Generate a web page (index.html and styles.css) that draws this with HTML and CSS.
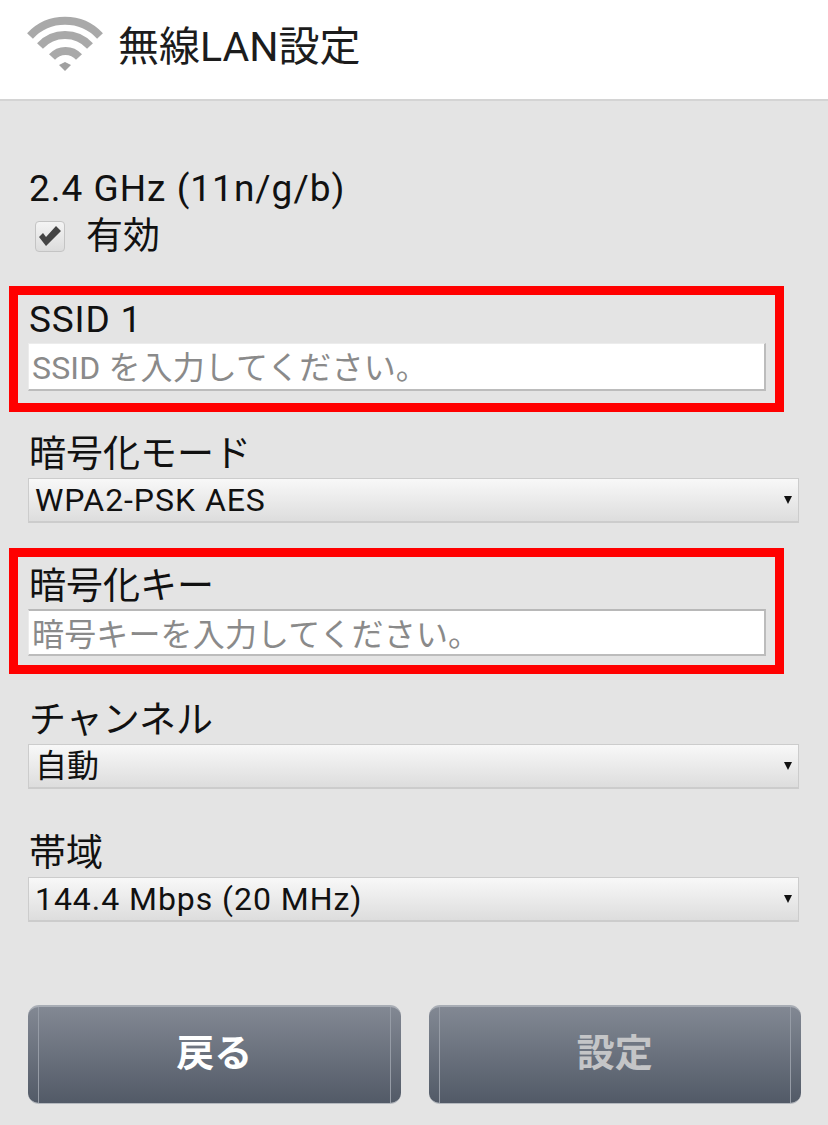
FILE: index.html
```html
<!DOCTYPE html>
<html lang="ja">
<head>
    <meta charset="UTF-8">
    <meta name="viewport" content="width=device-width, initial-scale=1.0">
    <title>無線LAN設定</title>
    <link rel="stylesheet" href="styles.css">
</head>
<body>
    <div class="header">
        <svg class="wifi-icon" width="78" height="56" viewBox="0 0 78 56">
            <path class="arc" d="M4 21 A48 48 0 0 1 74 21"/>
            <path class="arc" d="M14 31 A34 34 0 0 1 64 31"/>
            <path class="arc" d="M26 42 A18 18 0 0 1 53 42"/>
            <polygon class="dot" points="33,50 39,47 45,50 39,56"/>
        </svg>
        <h1>無線LAN設定</h1>
    </div>

    <div class="container">
        <div class="band">
            <p class="label latin">2.4 GHz (11n/g/b)</p>
            <div class="enable">
                <span class="checkbox">
                    <svg width="22" height="20" viewBox="0 0 22 20">
                        <path d="M0 11 L4 7 L7 11 L17 0 L22 5 L7 20 Z"/>
                    </svg>
                </span>
                <span class="label">有効</span>
            </div>
        </div>

        <div class="field marked ssid">
            <p class="label latin">SSID 1</p>
            <input class="text-input" type="text" placeholder="SSID を入力してください。">
        </div>

        <div class="field before-marked">
            <p class="label">暗号化モード</p>
            <div class="select latin">WPA2-PSK AES</div>
        </div>

        <div class="field marked key">
            <p class="label">暗号化キー</p>
            <input class="text-input" type="text" placeholder="暗号キーを入力してください。">
        </div>

        <div class="field">
            <p class="label">チャンネル</p>
            <div class="select">自動</div>
        </div>

        <div class="field">
            <p class="label">帯域</p>
            <div class="select latin">144.4 Mbps (20 MHz)</div>
        </div>

        <div class="buttons">
            <button type="button">戻る</button>
            <button type="button" class="disabled">設定</button>
        </div>
    </div>
</body>
</html>
```

FILE: styles.css
```css
body {
    font-family: Roboto, 'Noto Sans CJK JP', sans-serif;
    background-color: #e4e4e4;
    color: #111;
    margin: 0;
    padding: 0;
}
.header {
    background: white;
    height: 99px;
    border-bottom: 2px solid #d4d4d4;
    display: flex;
    align-items: flex-start;
}
.wifi-icon {
    margin: 15px 0 0 26px;
}
.arc {
    fill: none;
    stroke: #a9a9a9;
    stroke-width: 8;
}
.dot {
    fill: #a0a0a0;
}
h1 {
    font-size: 41px;
    font-weight: 400;
    line-height: 48px;
    margin: 23px 0 0 14px;
    color: #1c1c1c;
}
.container {
    padding: 63px 29px 0 28px;
}
.label {
    font-size: 37px;
    line-height: 46px;
    margin: 0;
    padding: 2px 0 0 1px;
    display: block;
}
.latin {
    letter-spacing: 0.8px;
}
.band .latin {
    letter-spacing: 1px;
}
.band {
    margin-bottom: 26px;
}
.enable {
    display: flex;
    align-items: center;
    height: 48px;
}
.checkbox {
    width: 28px;
    height: 29px;
    margin-left: 7px;
    margin-right: 20px;
    border: 1px solid #c4c4c4;
    border-radius: 4px;
    background: linear-gradient(#f4f4f4, #dcdcdc);
    display: flex;
    align-items: center;
    justify-content: center;
}
.checkbox svg {
    fill: #444;
    flex-shrink: 0;
}
.field {
    margin-bottom: 40px;
}
.field.before-marked {
    margin-bottom: 25px;
}
.field.marked {
    border: 9px solid #ff0000;
    margin-left: -19px;
    margin-right: 15px;
    padding-left: 10px;
    padding-right: 9px;
}
.field.ssid {
    margin-bottom: 18px;
    padding-bottom: 12px;
}
.field.key {
    margin-bottom: 22px;
    padding-top: 4px;
    padding-bottom: 9px;
}
.key .label {
    padding-top: 3px;
    line-height: 45px;
}
.text-input {
    display: block;
    width: 100%;
    height: 48px;
    box-sizing: border-box;
    background: white;
    border: none;
    border-top: 1px solid #ececec;
    border-left: 1px solid #ececec;
    border-right: 2px solid #bcbcbc;
    border-bottom: 2px solid #bcbcbc;
    padding: 2px 3px 0;
    font-family: inherit;
    font-size: 32px;
    letter-spacing: 0.15px;
    outline: none;
}
.key .text-input {
    height: 47px;
    border-top: 2px solid #b8b8b8;
    padding-top: 5px;
}
.text-input::placeholder {
    color: #8a8a8a;
    opacity: 1;
}
.select {
    position: relative;
    height: 45px;
    line-height: 43px;
    box-sizing: border-box;
    border: 1px solid #cccccc;
    border-bottom-width: 2px;
    background: linear-gradient(#f8f8f8, #dddddd);
    padding-left: 6px;
    font-size: 32px;
    color: #111;
}
.select.latin {
    letter-spacing: 0.95px;
}
.select::after {
    content: "";
    position: absolute;
    right: 6px;
    top: 17px;
    border-left: 4px solid transparent;
    border-right: 4px solid transparent;
    border-top: 8px solid #111;
}
.buttons {
    display: flex;
    gap: 28px;
    margin: 83px -2px 0 0;
}
button {
    flex: 1;
    height: 99px;
    border: none;
    border-top: 2px solid #a8adb5;
    border-bottom: 1px solid #b4b8be;
    border-radius: 11px;
    padding: 0 0 12px;
    background:
        linear-gradient(#969ca6, #969ca6) 10px 0 / 1px 100% no-repeat,
        linear-gradient(#969ca6, #969ca6) calc(100% - 10px) 0 / 1px 100% no-repeat,
        linear-gradient(#828893, #525a67);
    color: white;
    font-family: inherit;
    font-size: 38px;
    font-weight: 700;
}
button.disabled {
    color: #c4c5c7;
}
```
